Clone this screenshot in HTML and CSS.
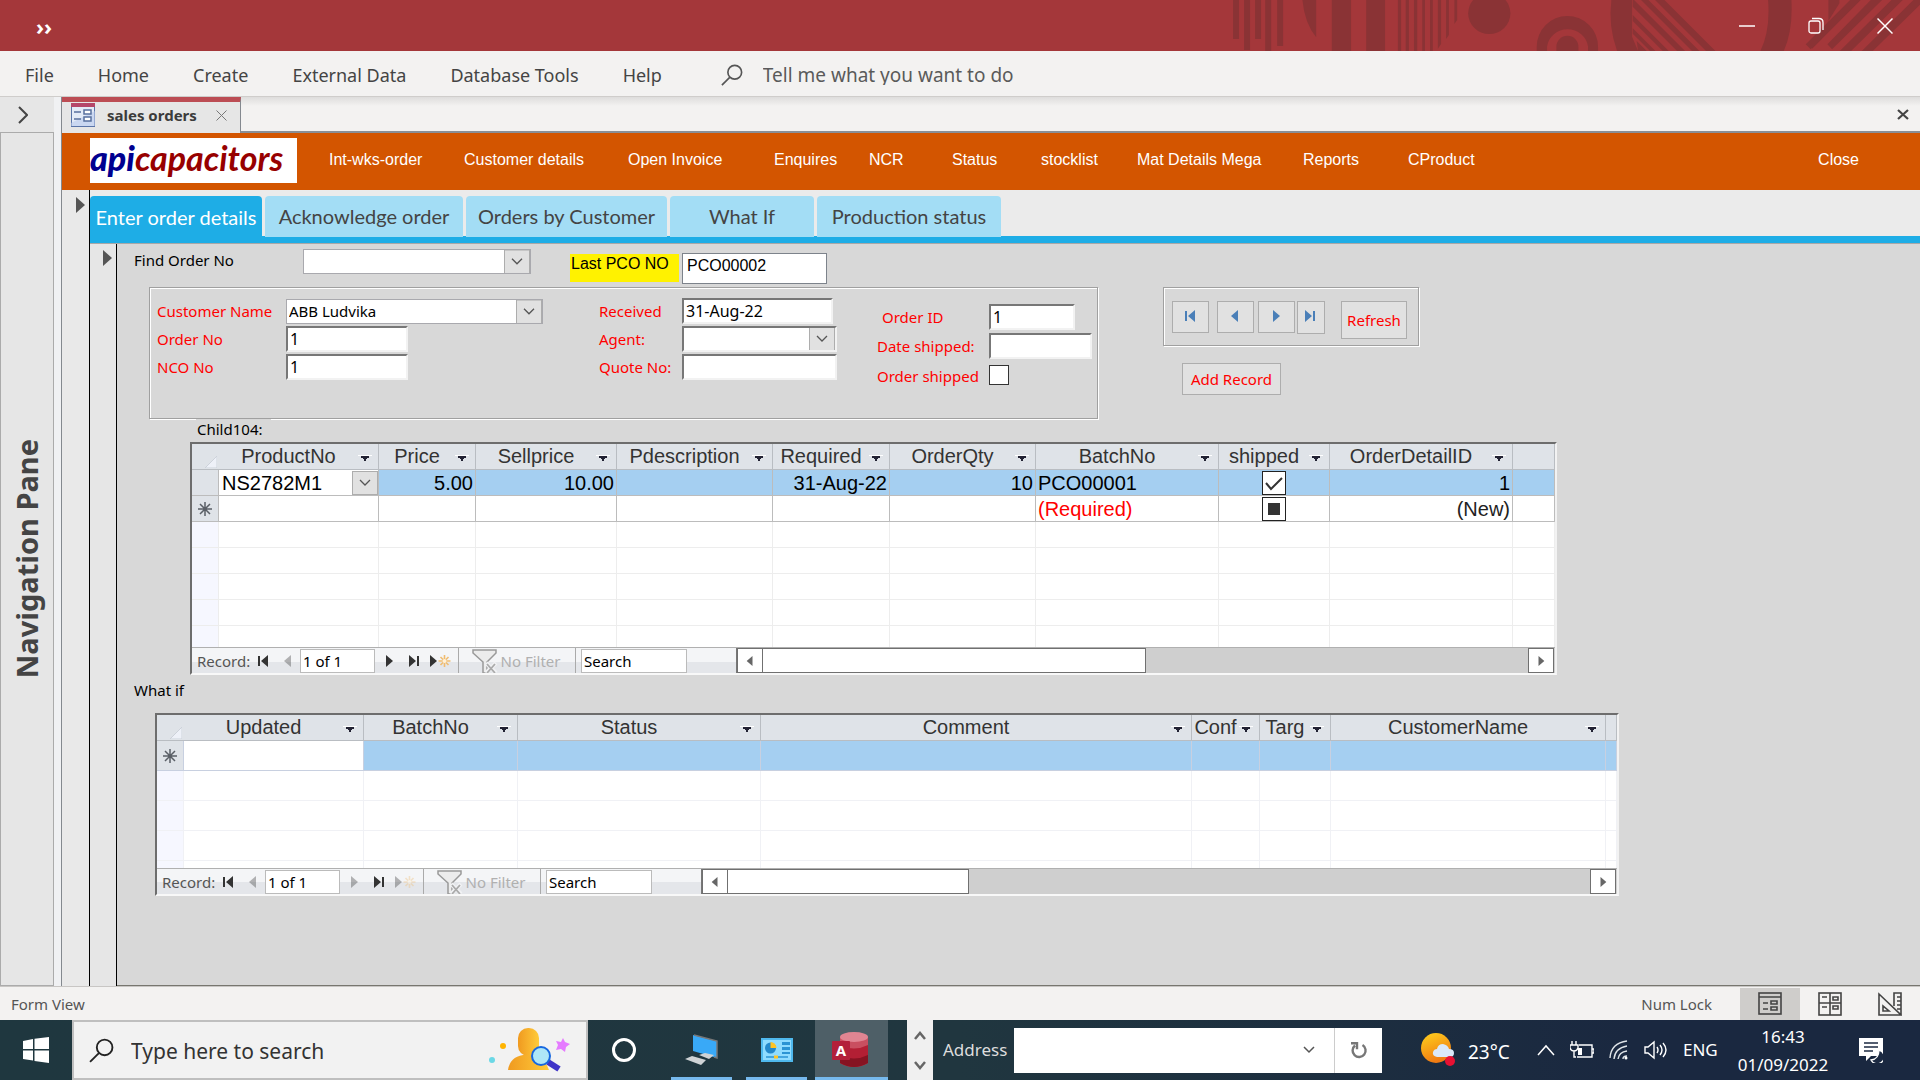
FILE: index.html
```html
<!DOCTYPE html>
<html lang="en">
<head>
<meta charset="utf-8">
<title>sales orders</title>
<link rel="stylesheet" href="styles.css">
</head>
<body>
<svg width="0" height="0" class="defs" aria-hidden="true">
  <symbol id="first" viewBox="0 0 12 12"><path d="M1 1h2v10H1zM11 0v12L4 6z"/></symbol>
  <symbol id="prev" viewBox="0 0 12 12"><path d="M9 0v12L2 6z"/></symbol>
  <symbol id="next" viewBox="0 0 12 12"><path d="M3 0v12l7-6z"/></symbol>
  <symbol id="last" viewBox="0 0 12 12"><path d="M9 1h2v10H9zM1 0v12l7-6z"/></symbol>
  <symbol id="new" viewBox="0 0 21 14"><path d="M0 1v12l7-6z"/><path d="M14.500 1v12M8.500 7h12M10.500 3l8 8M18.500 3l-8 8" stroke="#f0bc70" stroke-width="1.600" fill="none"/><circle cx="14.500" cy="7" r="2" fill="#fff1d8"/></symbol>
  <symbol id="funnel" viewBox="0 0 26 24"><path d="M1 1h23v3l-9 9v11h-4V13L1 4z" fill="#ececec" stroke="#999" stroke-width="1.500"/><path d="M14 14l10 10M24 14L14 24" stroke="#f1f2f4" stroke-width="4"/><path d="M15 15l8 9M23 15l-8 9" stroke="#aaa" stroke-width="1.800"/></symbol>
  <symbol id="drop" viewBox="0 0 14 8"><path d="M0 1.500h14" stroke="#fff"/><path d="M3 2h8v2H9v1H8v2H6V5H5V4H3z" fill="#223"/></symbol>
  <symbol id="star" viewBox="0 0 14 14"><path d="M7 0v14M0 7h14M2 2l10 10M12 2L2 12" stroke="#5a5f66" stroke-width="1.500"/></symbol>
  <symbol id="corner" viewBox="0 0 12 12"><path d="M12 0v12H0z" fill="#eef1f8" stroke="#cdd2da"/></symbol>
  <symbol id="search" viewBox="0 0 24 24"><circle cx="15" cy="9" r="7.500" fill="none" stroke="currentColor" stroke-width="1.800"/><path d="M9.500 14.500L1 23" stroke="currentColor" stroke-width="1.800"/></symbol>
</svg>

<header class="titlebar">
  <button class="quick" aria-label="Customize toolbar">››</button>
  <svg class="ornament" viewBox="0 0 1568 153" preserveAspectRatio="none" fill="#8a3335" aria-hidden="true">
    <path d="M72 0h13v117H72zM96 0h13v150H96zM120 0h13v117h-13zM142 0h13v153h-13zM168 0h13v138h-13z"/>
    <path d="M223 0h30v112Q228 70 223 0zM287 0h42v153h-42zM362 0h41v153h-41z"/>
    <path d="M431 0h7v153h-7zM448 0h7v153h-7zM466 0h7v153h-7zM484 0h6v153h-6zM501 0h6v153h-6zM518 0h7v132l-7 14zM536 0h6v105l-6 12zM554 0h6v60l-6 12z"/>
    <ellipse cx="630" cy="40" rx="46" ry="62"/>
    <g transform="translate(697 0) scale(.726 1)">
      <path d="M50 153v-13a92 92 0 0 1 184 0v13h-30v-13a62 60 0 0 0-123 0v13z"/>
      <path d="M109 153v-13a33 33 0 0 1 66 0v13z"/>
      <path d="M274 0h62v110l18 43h-63q-27-75-17-153z"/>
      <path d="M405 0h28l153 153h-28zM363 0h22l153 153h-22zM338 0h4l153 153h-24L338 20zM338 45l108 108h-18L338 63zM338 85l68 68h-16l-52-52zM350 123l30 30h-26z"/>
      <path d="M744 0h70q5 90-23 153h-70q30-60 23-153z"/>
      <path d="M922 0h36L876 148l-20-16zM986 0h36L938 148l-16-16zM922 0l36 0zM1050 0h33L930 153h-0zM1050 0h33L985 153h-33zM1113 0h35L1020 153h-35zM1176 0h24v12L1082 153h-34z" fill="none"/>
      <path d="M922 0h36L876 148 857 134zM986 0h36L941 148l-18-15zM1052 0h32L995 153h-36zM1114 0h33L1030 153h-34zM1180 0h20v18L1094 153h-34z" fill="none"/>
      <path d="M925 0h33v10L872 148l-15-15 68-68zM1052 0h34L936 148l-14-15zM1114 0h34L993 153h-34zM1180 0h20v14L1058 153h-33zM990 0h32L876 146l-17-15z"/>
    </g>
  </svg>
  <div class="window-buttons">
    <button aria-label="Minimize"><svg width="16" height="18" viewBox="0 0 16 18"><path d="M0 9h16" stroke="#fff" stroke-width="1.500"/></svg></button>
    <button aria-label="Restore"><svg width="16" height="18" viewBox="0 0 16 18" fill="none" stroke="#fff" stroke-width="1.300"><rect x="1" y="4" width="11" height="12" rx="2"/><path d="M4 1.500h7q4 0 4 4V13"/></svg></button>
    <button aria-label="Close window"><svg width="16" height="18" viewBox="0 0 16 18"><path d="M.5 1.500l15 15M15.500 1.500l-15 15" stroke="#fff" stroke-width="1.500"/></svg></button>
  </div>
</header>

<nav class="ribbon">
  <a href="#">File</a><a href="#">Home</a><a href="#">Create</a><a href="#">External Data</a><a href="#">Database Tools</a><a href="#">Help</a>
  <label class="tell"><svg width="22" height="22"><use href="#search"/></svg><input type="text" placeholder="Tell me what you want to do"></label>
</nav>

<main class="workspace">
  <aside class="navpane">
    <button class="expand" aria-label="Expand navigation pane"><svg width="10" height="18" viewBox="0 0 10 18"><path d="M1 1l8 8-8 8" fill="none" stroke="#444" stroke-width="2"/></svg></button>
    <div class="navpane-body"><span>Navigation Pane</span></div>
  </aside>
  <section class="document">
    <div class="doctabs">
      <div class="doctab">
        <svg width="24" height="24" viewBox="0 0 24 24"><rect x=".5" y=".5" width="23" height="23" fill="#e4ebf7" stroke="#5a74a8"/><path d="M0 0h24v4H0z" fill="#b5476a"/><path d="M0 20l24-12v15H0z" fill="#b9caec" opacity=".6"/><path d="M3 9h7M3 16h7" stroke="#58709e" stroke-width="1.500"/><path d="M13 7h7v4h-7zM13 14h7v4h-7z" fill="#fff" stroke="#58709e" stroke-width="1.500"/></svg>
        <span>sales orders</span>
        <button aria-label="Close tab"><svg width="11" height="11" viewBox="0 0 11 11"><path d="M.5.5l10 10M10.500.5l-10 10" stroke="#777"/></svg></button>
      </div>
      <button class="closedoc" aria-label="Close document"><svg width="12" height="11" viewBox="0 0 12 11"><path d="M1 1l10 9M11 1L1 10" stroke="#444" stroke-width="2.200"/></svg></button>
    </div>

    <div class="banner">
      <div class="logo"><b>api</b>capacitors</div>
      <nav class="banner-nav">
        <a href="#">Int-wks-order</a><a href="#">Customer details</a><a href="#">Open Invoice</a><a href="#">Enquires</a><a href="#">NCR</a><a href="#">Status</a><a href="#">stocklist</a><a href="#">Mat Details Mega</a><a href="#">Reports</a><a href="#">CProduct</a><a href="#">Close</a>
      </nav>
    </div>

    <div class="outer">
      <div class="selector"><svg width="9" height="16" viewBox="0 0 9 16"><path d="M0 0v16l9-8z" fill="#555"/></svg></div>
      <div class="pages">
        <nav class="pagetabs">
          <a class="pagetab active" href="#">Enter order details</a>
          <a class="pagetab" href="#">Acknowledge order</a>
          <a class="pagetab" href="#">Orders by Customer</a>
          <a class="pagetab" href="#">What If</a>
          <a class="pagetab" href="#">Production status</a>
        </nav>
        <div class="inner">
          <div class="selector"><svg width="9" height="16" viewBox="0 0 9 16"><path d="M0 0v16l9-8z" fill="#555"/></svg></div>
          <form class="form">
            <div class="find">
              <label for="find">Find Order No</label>
              <select id="find" class="combo"><option></option></select>
              <label for="pco" class="mark">Last PCO NO</label>
              <input id="pco" class="pco" value="PCO00002">
            </div>
            <div class="details">
              <div class="frame order">
                <div class="fields customer">
                  <label for="cust">Customer Name</label><select id="cust" class="combo"><option>ABB Ludvika</option></select>
                  <label for="ono">Order No</label><input id="ono" class="short" value="1">
                  <label for="nco">NCO No</label><input id="nco" class="short" value="1">
                </div>
                <div class="fields quote">
                  <label for="rec">Received</label><input id="rec" class="received" value="31-Aug-22">
                  <label for="agent">Agent:</label><select id="agent" class="combo sunk"><option></option></select>
                  <label for="qno">Quote No:</label><input id="qno">
                </div>
                <div class="fields shipping">
                  <label for="oid" class="indent">Order ID</label><input id="oid" class="id" value="1">
                  <label for="dship">Date shipped:</label><input id="dship">
                  <label for="oship" class="low">Order shipped</label><input id="oship" type="checkbox" class="tick">
                </div>
              </div>
              <div class="actions">
                <div class="frame browse">
                  <button type="button" aria-label="First record"><svg width="14" height="12"><use href="#first"/></svg></button>
                  <button type="button" aria-label="Previous record"><svg width="14" height="12"><use href="#prev"/></svg></button>
                  <button type="button" aria-label="Next record"><svg width="14" height="12"><use href="#next"/></svg></button>
                  <button type="button" class="slim" aria-label="Last record"><svg width="14" height="12"><use href="#last"/></svg></button>
                  <button type="button" class="refresh">Refresh</button>
                </div>
                <button type="button" class="add">Add Record</button>
              </div>
            </div>

            <div class="child-label">Child104:</div>
            <div class="subform items">
              <div class="sheet">
                <table>
                  <colgroup><col class="w27"><col class="w160"><col class="w97"><col class="w141"><col class="w156"><col class="w117"><col class="w146"><col class="w183"><col class="w111"><col class="w183"><col></colgroup>
                  <thead><tr>
                    <th><svg width="12" height="12"><use href="#corner"/></svg></th>
                    <th><div><span>ProductNo</span><svg><use href="#drop"/></svg></div></th>
                    <th><div><span>Price</span><svg><use href="#drop"/></svg></div></th>
                    <th><div><span>Sellprice</span><svg><use href="#drop"/></svg></div></th>
                    <th><div><span>Pdescription</span><svg><use href="#drop"/></svg></div></th>
                    <th><div><span>Required</span><svg><use href="#drop"/></svg></div></th>
                    <th><div><span>OrderQty</span><svg><use href="#drop"/></svg></div></th>
                    <th><div><span>BatchNo</span><svg><use href="#drop"/></svg></div></th>
                    <th><div><span>shipped</span><svg><use href="#drop"/></svg></div></th>
                    <th><div><span>OrderDetailID</span><svg><use href="#drop"/></svg></div></th>
                    <th></th>
                  </tr></thead>
                  <tbody>
                    <tr class="current"><td></td><td class="edit"><select class="combo" aria-label="ProductNo"><option>NS2782M1</option></select></td><td class="num">5.00</td><td class="num">10.00</td><td></td><td class="num">31-Aug-22</td><td class="num">10</td><td>PCO00001</td><td class="mid"><input type="checkbox" class="box" checked aria-label="shipped"></td><td class="num">1</td><td></td></tr>
                    <tr class="fresh"><td><svg width="14" height="14"><use href="#star"/></svg></td><td></td><td></td><td></td><td></td><td></td><td></td><td class="need">(Required)</td><td class="mid"><input type="checkbox" class="box mixed" aria-label="shipped, new record"></td><td class="num">(New)</td><td></td></tr>
                    <tr><td></td><td></td><td></td><td></td><td></td><td></td><td></td><td></td><td></td><td></td><td></td></tr>
                    <tr><td></td><td></td><td></td><td></td><td></td><td></td><td></td><td></td><td></td><td></td><td></td></tr>
                    <tr><td></td><td></td><td></td><td></td><td></td><td></td><td></td><td></td><td></td><td></td><td></td></tr>
                    <tr><td></td><td></td><td></td><td></td><td></td><td></td><td></td><td></td><td></td><td></td><td></td></tr>
                    <tr><td></td><td></td><td></td><td></td><td></td><td></td><td></td><td></td><td></td><td></td><td></td></tr>
                  </tbody>
                </table>
              </div>
              <div class="recordbar">
                <div class="recordnav">
                  <span>Record:</span>
                  <button type="button" aria-label="First"><svg width="12" height="12"><use href="#first"/></svg></button>
                  <button type="button" aria-label="Previous" disabled><svg width="12" height="12"><use href="#prev"/></svg></button>
                  <input class="pos" value="1 of 1" aria-label="Record position">
                  <button type="button" aria-label="Next"><svg width="12" height="12"><use href="#next"/></svg></button>
                  <button type="button" aria-label="Last"><svg width="12" height="12"><use href="#last"/></svg></button>
                  <button type="button" class="newrec" aria-label="New record"><svg width="21" height="14"><use href="#new"/></svg></button>
                </div>
                <button type="button" class="filter" disabled><svg width="26" height="24"><use href="#funnel"/></svg>No Filter</button>
                <div class="searchbox"><input value="Search" aria-label="Search records"></div>
                <div class="scroll"><button type="button" aria-label="Scroll left"><svg width="10" height="12"><use href="#prev"/></svg></button><div class="thumb"></div><button type="button" class="right" aria-label="Scroll right"><svg width="10" height="12"><use href="#next"/></svg></button></div>
              </div>
            </div>

            <div class="whatif-label">What if</div>
            <div class="subform whatif">
              <div class="sheet">
                <table>
                  <colgroup><col class="w27"><col class="w180"><col class="w154"><col class="w243"><col class="w431"><col class="w68"><col class="w71"><col class="w275"><col></colgroup>
                  <thead><tr>
                    <th><svg width="12" height="12"><use href="#corner"/></svg></th>
                    <th><div><span>Updated</span><svg><use href="#drop"/></svg></div></th>
                    <th><div><span>BatchNo</span><svg><use href="#drop"/></svg></div></th>
                    <th><div><span>Status</span><svg><use href="#drop"/></svg></div></th>
                    <th><div><span>Comment</span><svg><use href="#drop"/></svg></div></th>
                    <th><div><span>Conf</span><svg><use href="#drop"/></svg></div></th>
                    <th><div><span>Targ</span><svg><use href="#drop"/></svg></div></th>
                    <th><div><span>CustomerName</span><svg><use href="#drop"/></svg></div></th>
                    <th></th>
                  </tr></thead>
                  <tbody>
                    <tr class="current"><td><svg width="14" height="14"><use href="#star"/></svg></td><td class="edit"></td><td></td><td></td><td></td><td></td><td></td><td></td><td></td></tr>
                    <tr><td></td><td></td><td></td><td></td><td></td><td></td><td></td><td></td><td></td></tr>
                    <tr><td></td><td></td><td></td><td></td><td></td><td></td><td></td><td></td><td></td></tr>
                    <tr><td></td><td></td><td></td><td></td><td></td><td></td><td></td><td></td><td></td></tr>
                    <tr><td></td><td></td><td></td><td></td><td></td><td></td><td></td><td></td><td></td></tr>
                  </tbody>
                </table>
              </div>
              <div class="recordbar">
                <div class="recordnav">
                  <span>Record:</span>
                  <button type="button" aria-label="First"><svg width="12" height="12"><use href="#first"/></svg></button>
                  <button type="button" aria-label="Previous" disabled><svg width="12" height="12"><use href="#prev"/></svg></button>
                  <input class="pos" value="1 of 1" aria-label="Record position">
                  <button type="button" aria-label="Next" disabled><svg width="12" height="12"><use href="#next"/></svg></button>
                  <button type="button" aria-label="Last"><svg width="12" height="12"><use href="#last"/></svg></button>
                  <button type="button" class="newrec" aria-label="New record" disabled><svg width="21" height="14"><use href="#new"/></svg></button>
                </div>
                <button type="button" class="filter" disabled><svg width="26" height="24"><use href="#funnel"/></svg>No Filter</button>
                <div class="searchbox"><input value="Search" aria-label="Search records"></div>
                <div class="scroll"><button type="button" aria-label="Scroll left"><svg width="10" height="12"><use href="#prev"/></svg></button><div class="thumb"></div><button type="button" class="right" aria-label="Scroll right"><svg width="10" height="12"><use href="#next"/></svg></button></div>
              </div>
            </div>
          </form>
        </div>
      </div>
    </div>
  </section>
</main>

<footer class="status">
  <span>Form View</span>
  <span class="numlock">Num Lock</span>
  <button class="on" aria-label="Form view"><svg width="24" height="24" viewBox="0 0 24 24" fill="none" stroke="#444" stroke-width="1.600"><rect x="1" y="1" width="22" height="21"/><path d="M1 5h22M5 11h5M5 17h5"/><path d="M13 9h6v3h-6zM13 15h6v3h-6z"/></svg></button>
  <button aria-label="Layout view"><svg width="24" height="24" viewBox="0 0 24 24" fill="none" stroke="#444" stroke-width="1.600"><rect x="1" y="1" width="22" height="22"/><path d="M1 11h22M12 1v22M4 5h5M4 15h5M15 5h5v3h-5zM15 14h5v3h-5z"/></svg></button>
  <button aria-label="Design view"><svg width="24" height="24" viewBox="0 0 24 24" fill="none" stroke="#444" stroke-width="1.600"><path d="M1 2v21h22zM5 14v5h6zM16 14V1h7v22M19 5h4M19 9h4M19 13h4M19 17h4"/></svg></button>
</footer>

<footer class="taskbar">
  <button class="start" aria-label="Start"><svg width="26" height="26" viewBox="0 0 26 26" fill="#fff"><path d="M0 4l10-2v10H0zM11.500 1.700L26 0v12H11.500zM0 13.500h10v10L0 22zM11.500 13.500H26V26l-14.500-2z"/></svg></button>
  <label class="tasksearch">
    <svg width="25" height="25"><use href="#search"/></svg>
    <input type="text" placeholder="Type here to search">
    <svg width="84" height="44" viewBox="0 0 84 44" aria-hidden="true"><defs><linearGradient id="g1"><stop stop-color="#f09a20"/><stop offset="1" stop-color="#ffcb3a"/></linearGradient></defs><circle cx="15" cy="18" r="3" fill="#ffb400"/><circle cx="4" cy="32" r="3" fill="#6bd8e6"/><path d="M20 42q2-13 15-15h8q14 3 18 15z" fill="url(#g1)"/><rect x="30" y="0" width="21" height="28" rx="10" fill="url(#g1)"/><path d="M60 34l11 7" stroke="#3f33c8" stroke-width="6"/><circle cx="53" cy="28" r="9" fill="#aee6f7" stroke="#1768e0" stroke-width="2"/><path d="M75 10l2 4 5 2-4 3-1 5-4-3-5 1 2-5-2-4 5 1z" fill="#e57bff"/></svg>
  </label>
  <button class="app cortana" aria-label="Cortana"><svg width="26" height="26" viewBox="0 0 26 26"><circle cx="13" cy="13" r="10.500" fill="none" stroke="#fff" stroke-width="3"/></svg></button>
  <button class="app open double" aria-label="Remote desktop"><svg width="34" height="34" viewBox="0 0 34 34"><path d="M8 2l24 6v17L8 18z" fill="#39a9f7"/><path d="M9 2l23 6v17l-3-1" fill="none" stroke="#777" stroke-width="1.500"/><path d="M0 26l7-3 14 4-5 5zM14 22l6-2 9 2-5 4z" fill="#cfd3d6"/></svg></button>
  <button class="app open" aria-label="Control panel"><svg width="32" height="24" viewBox="0 0 32 24"><rect width="32" height="24" fill="#4fb9ee"/><rect x="2" y="2" width="28" height="20" fill="#8fdcff"/><circle cx="9.500" cy="10" r="5.500" fill="#2489cc"/><path d="M9.500 10V4a6 6 0 0 1 6 6z" fill="#ffc425"/><path d="M21 4h8v3h-8zM21 9h8v3h-8zM21 14h8v2h-8z" fill="#2b94d4"/><path d="M5 19h22" stroke="#2b94d4" stroke-width="1.500"/><path d="M13 19h4" stroke="#ffc425" stroke-width="3"/></svg></button>
  <button class="app open current" aria-label="Access"><svg width="36" height="36" viewBox="0 0 36 36"><path d="M8 5v26q14 8 28 0V5z" fill="#c94f60"/><path d="M8 13v18q14 8 28 0V13q-14 7-28 0z" fill="#b31f34"/><path d="M8 23v8q14 8 28 0v-8q-14 7-28 0z" fill="#861322"/><ellipse cx="22" cy="5" rx="14" ry="5" fill="#e08592"/><rect y="9" width="18" height="19" rx="1" fill="#b3203a"/></svg><b>A</b></button>
  <div class="scroller"><button aria-label="Up"><svg width="12" height="9" viewBox="0 0 12 9"><path d="M1 8l5-6 5 6" fill="none" stroke="#666" stroke-width="2.500"/></svg></button><button aria-label="Down"><svg width="12" height="9" viewBox="0 0 12 9"><path d="M1 1l5 6 5-6" fill="none" stroke="#666" stroke-width="2.500"/></svg></button></div>
  <label class="address" for="addr">Address</label>
  <select id="addr"><option></option></select>
  <button class="go" aria-label="Refresh address"><svg width="18" height="18" viewBox="0 0 18 18"><path d="M12.500 4A6.500 6.500 0 1 1 5 4.500M1 2.200h6v6" fill="none" stroke="#777" stroke-width="2.400"/></svg></button>
  <div class="weather"><svg width="34" height="34" viewBox="0 0 34 34"><defs><linearGradient id="g2" x2=".4" y2="1"><stop stop-color="#ffd21e"/><stop offset="1" stop-color="#f07a12"/></linearGradient></defs><circle cx="15" cy="15" r="15" fill="url(#g2)"/><path d="M16 24q-5-1-4-5 1-3 4-3 1-5 6-5 5 1 6 5 5 0 5 4t-4 4z" fill="#dbe8f8"/><circle cx="29" cy="28" r="5" fill="#e81133"/></svg><span>23°C</span></div>
  <div class="tray">
    <svg width="18" height="12" viewBox="0 0 18 12"><path d="M1 11l8-9 8 9" fill="none" stroke="#fff" stroke-width="1.500"/></svg>
    <svg width="24" height="18" viewBox="0 0 24 18" fill="none" stroke="#fff" stroke-width="1.400"><path d="M7 16h15V4H9M22 8h2v4h-2M2 0v4M6 0v4M0 4h8v3q-1 3-4 3t-4-3zM4 10v6h2"/><path d="M8 7h4v7H8z" fill="#fff" stroke="none"/></svg>
    <svg width="20" height="20" viewBox="0 0 20 20" fill="none" stroke="#dfe4e8" stroke-width="1.400"><path d="M1 18Q2 3 18 1M5 19Q6 8 18 6M9 19q1-7 9-8M14 19q0-3 4-3"/><circle cx="17" cy="18" r="1.500" fill="#fff" stroke="none"/></svg>
    <svg width="24" height="20" viewBox="0 0 24 20" fill="none" stroke="#fff" stroke-width="1.400"><path d="M1 7h3l6-5v16l-6-5H1zM13 7q2 3 0 6M16 5q4 5 0 10M19 3q6 7 0 14"/></svg>
    <span>ENG</span>
  </div>
  <div class="clock"><span>16:43</span><span>01/09/2022</span></div>
  <button class="notify" aria-label="Notifications"><svg width="24" height="25" viewBox="0 0 24 25"><path d="M0 0h24v18H12l-5 5v-5H0z" fill="#fff"/><path d="M5 5h14M5 9h14M5 13h9" stroke="#1c2a42" stroke-width="1.500"/><path d="M20 12a7 7 0 1 1-8 10q8-1 8-10z" fill="#1c2a42" stroke="#fff" stroke-width="1.300"/></svg></button>
</footer>
</body>
</html>
```
FILE: styles.css
```css
* { box-sizing: border-box; }

body {
  margin: 0;
  height: 100vh;
  display: flex;
  flex-direction: column;
  overflow: hidden;
  font: 16px/20px "Noto Sans", sans-serif;
  color: #444;
  background: #f3f2f1;
}

a { color: inherit; text-decoration: none; }
button { padding: 0; border: 0; background: none; font: inherit; color: inherit; display: flex; align-items: center; justify-content: center; }
input, select { font: inherit; color: inherit; margin: 0; border-radius: 0; min-width: 0; }
.defs { position: absolute; }

/* window chrome */
.titlebar { display: flex; align-items: center; height: 51px; flex: none; background: #a4373a; color: #fff; position: relative; }
.quick { margin-left: 36px; font-size: 22px; font-weight: 700; z-index: 1; }
.ornament { position: absolute; right: 0; top: 0; width: 720px; height: 51px; }
.window-buttons { display: flex; margin-left: auto; padding-right: 1px; z-index: 1; }
.window-buttons button { width: 69px; height: 51px; }

.ribbon { display: flex; align-items: center; flex: none; height: 46px; padding: 2px 0 0 25px; gap: 44px; font-size: 18px; border-bottom: 1px solid #cfcdcb; }
.tell { display: flex; align-items: center; gap: 20px; margin-left: 15px; flex: 1; font-size: 19px; color: #555; }
.tell input { flex: 1; border: 0; background: none; padding: 0; }
.tell input::placeholder { color: #5a5a5a; opacity: 1; }

.workspace { display: flex; flex: 1; min-height: 0; }
.navpane { width: 62px; flex: none; display: flex; flex-direction: column; border-right: 8px solid #f0f1f3; background: #e6e6e6; }
.expand { height: 35px; width: 46px; }
.navpane-body { flex: 1; display: flex; align-items: center; justify-content: center; border: 1px solid #ababab; }
.navpane-body span { writing-mode: vertical-rl; transform: rotate(180deg); font-size: 29px; line-height: 30px; font-weight: 700; color: #444; }

.document { flex: 1; min-width: 0; display: flex; flex-direction: column; border-left: 1px solid #84898f; margin-left: -1px; }
.doctabs { display: flex; flex: none; height: 36px; justify-content: space-between; align-items: center; border-bottom: 2px solid #8a8f96; background: linear-gradient(#dedddc, #f3f2f1 9px); }
.doctab { display: flex; align-items: center; width: 179px; height: 36px; margin-bottom: -2px; padding: 0 13px 5px 9px; border-top: 5px solid #bc4d54; border-right: 1px solid #84898f; background: #e6e6e6; font-size: 15px; font-weight: 700; color: #3b3b3b; }
.doctab span { margin-left: 12px; flex: 1; }
.closedoc { margin-right: 11px; }

.banner { display: flex; flex: none; height: 57px; padding: 5px 61px 7px 28px; background: #d35500; }
.logo { width: 207px; background: #fff; color: #970000; font: italic 700 34px/39px Lato, sans-serif; white-space: nowrap; }
.logo b { color: #000090; }
.banner-nav { flex: 1; display: grid; grid-template-columns: 135px 164px 146px 95px 83px 89px 96px 166px 105px 1fr auto; margin-left: 32px; padding-bottom: 2px; align-items: center; color: #fff; font-family: "Liberation Sans", sans-serif; }

.outer, .inner { display: flex; flex: 1; min-height: 0; }
.selector { width: 28px; flex: none; border-right: 1px solid #000; background: #e9e9e9; padding: 7px 0 0 14px; }
.inner .selector { width: 27px; background: #e6e6e6; padding: 6px 0 0 13px; }
.selector svg { display: block; }
.pages { flex: 1; min-width: 0; display: flex; flex-direction: column; }
.pagetabs { display: flex; flex: none; align-items: flex-start; gap: 3px; height: 54px; padding-top: 6px; border-bottom: 1px solid #a8a8a8; background: linear-gradient(#ebebeb 46px, #1eade6 46px); }
.pagetab { height: 41px; line-height: 40px; border-radius: 4px 4px 0 0; background: #a3ddf5; font-family: Lato, sans-serif; font-size: 20px; color: #444; text-align: center; }
.pagetab:nth-child(1) { width: 172px; height: 47px; line-height: 42px; }
.pagetab:nth-child(2) { width: 198px; }
.pagetab:nth-child(3) { width: 201px; }
.pagetab:nth-child(4) { width: 144px; }
.pagetab:nth-child(5) { width: 184px; }
.pagetab.active { background: #1eade6; color: #fff; }

/* order form */
.form { flex: 1; min-width: 0; background: #d8d8d8; padding-top: 5px; border-bottom: 1px solid #77766f; font-size: 15px; color: #000; }
.form input:not([type]), .combo { height: 26px; padding: 0 3px; border: 2px solid; border-color: #777 #f2f2f2 #f2f2f2 #777; background-color: #fff; color: #000; }
.fields input:not([type]) { padding: 0 2px; font-size: 16px; }
.form .combo { appearance: none; border: 1px solid #a9a9ae; padding: 0 28px 0 2px; height: 25px; background: #fff url("data:image/svg+xml,%3Csvg xmlns='http://www.w3.org/2000/svg' width='26' height='24'%3E%3Crect x='.5' y='.5' width='25' height='23' fill='%23e1e1e1' stroke='%23adadad'/%3E%3Cpath d='M8 9l5 5 5-5' fill='none' stroke='%23555' stroke-width='1.300'/%3E%3C/svg%3E") right center no-repeat; }
.form .combo.sunk { border: 2px solid; border-color: #777 #f2f2f2 #f2f2f2 #777; height: 26px; }

.find { display: grid; grid-template-columns: 169px 228px 109px 145px; align-items: start; height: 38px; padding-left: 17px; }
.find label { line-height: 22px; }
.find .mark { height: 28px; width: 109px; margin: 5px 0 0 39px; line-height: 20px; padding-left: 1px; background: #fff200; font-family: "Liberation Sans", sans-serif; font-size: 16px; }
.form .find .pco { height: 31px; width: 145px; margin: 4px 0 0 42px; padding: 0 4px 6px; border: 1px solid #7d838b; font-family: "Liberation Sans", sans-serif; font-size: 16px; }

.details { display: flex; align-items: flex-start; gap: 65px; padding-left: 32px; }
.frame { border: 1px solid #a0a0a0; box-shadow: 1px 1px 0 #fff, inset 1px 1px 0 #fff; }
.order { display: flex; align-items: flex-start; width: 949px; height: 132px; padding: 9px 6px 0 7px; color: #f00; }
.fields { display: grid; grid-auto-rows: 28px; align-items: center; }
.customer { grid-template-columns: 129px 257px; }
.quote { grid-template-columns: 83px 155px; margin-left: 56px; }
.shipping { grid-template-columns: 112px 103px; margin: 5px 0 0 40px; grid-auto-rows: 29px; }
.fields label { line-height: 26px; white-space: nowrap; }
.indent { padding-left: 5px; }
.low { align-self: end; }
.short { width: 122px; }
.received { width: 151px; }
.id { width: 86px; }
.tick { appearance: none; width: 20px; height: 20px; align-self: center; border: 1px solid #333; background: #fff; }

.browse { display: flex; align-items: flex-start; width: 256px; height: 59px; padding: 13px 0 0 8px; }
.browse button, .add { border: 1px solid #adadad; background: #e1e1e1; color: #f00; }
.browse button { width: 37px; height: 32px; margin-right: 8px; padding: 0 2px 3px 0; }
.browse button:nth-child(2) { margin-right: 4px; }
.browse button:nth-child(3) { margin-right: 2px; }
.browse .slim { width: 28px; height: 33px; margin-right: 16px; }
.browse .refresh { width: 66px; height: 38px; margin: 0; padding: 0; }
.browse svg { fill: #4a7fb8; }
.add { width: 99px; height: 32px; margin: 17px 0 0 19px; }

.child-label { position: relative; width: 75px; height: 23px; margin-left: 79px; padding-left: 1px; background: #d8d8d8; }
.whatif-label { height: 38px; padding: 5px 0 0 17px; }

/* datasheets */
.subform { border: 2px solid; border-color: #6d6d6d #f2f2f2 #f8f8f8 #6d6d6d; background: #fff; }
.items { width: 1367px; margin-left: 73px; }
.whatif { width: 1464px; margin-left: 38px; }
.sheet { overflow: hidden; height: 203px; font: 20px/23px "Liberation Sans", sans-serif; }
.whatif .sheet { height: 153px; }
table { table-layout: fixed; border-collapse: separate; border-spacing: 0; width: 100%; }
.w27 { width: 27px; } .w68 { width: 68px; } .w71 { width: 71px; } .w97 { width: 97px; } .w111 { width: 111px; }
.w117 { width: 117px; } .w141 { width: 141px; } .w146 { width: 146px; } .w154 { width: 154px; } .w156 { width: 156px; }
.w160 { width: 160px; } .w180 { width: 180px; } .w183 { width: 183px; } .w243 { width: 243px; } .w275 { width: 275px; } .w431 { width: 431px; }
th, td { height: 26px; padding: 2px 2px 0; border: 0 solid #ededed; border-width: 0 1px 1px 0; white-space: nowrap; overflow: hidden; text-align: left; }
th { padding-top: 0; background: #dfe3e8; border-color: #b9bdc2; font-weight: 400; color: #333; }
th div { display: flex; align-items: center; }
th span { flex: 1; min-width: 0; overflow: hidden; text-align: center; }
th div svg { width: 14px; height: 8px; margin: 3px 4px 0 2px; flex: none; }
th:first-child { border-right: 0; text-align: right; }
th:first-child svg { display: inline-block; vertical-align: bottom; }
td:first-child { padding: 0; background: #f6f7ff; text-align: center; }
td:first-child svg { display: block; margin: 0 auto; }
.current td { background: #a5cff1; border-color: #bcbcbc; color: #000; }
.current td.edit { background: #fff; padding: 0; }
.current td:first-child, .fresh td:first-child { background: #dfe3e8; }
.fresh td { border-color: #bcbcbc; color: #222; }
.fresh td.need { color: #f00; }
.num { text-align: right; }
.mid, .fresh .mid { padding: 0; text-align: center; line-height: 0; }
.form .edit .combo { display: block; width: 100%; height: 25px; border: 0; padding: 2px 0 0 3px; }
.whatif tbody td { height: 30px; border-color: #f0f1f5; }
.whatif .current td { border-color: #c8d0e0; }
.box { appearance: none; width: 24px; height: 24px; border: 1px solid #222; background: #fff; }
.box:checked { background: #fff url("data:image/svg+xml,%3Csvg xmlns='http://www.w3.org/2000/svg' width='22' height='22'%3E%3Cpath d='M3 11l5 6L19 6' fill='none' stroke='%23333' stroke-width='2'/%3E%3C/svg%3E"); }
.box.mixed { background: linear-gradient(#333, #333) center / 12px 12px no-repeat #fff; }

.recordbar { display: flex; height: 26px; font-size: 15px; color: #555; background: linear-gradient(#f4f5f7 54%, #e4e6ea 54%); border-top: 1px solid #b0b0b0; }
.recordnav { display: flex; align-items: center; width: 267px; padding-left: 5px; border-right: 1px solid #aaa; }
.recordnav span { width: 60px; }
.recordnav button { width: 12px; height: 20px; margin-right: 13px; }
.recordnav svg { fill: #333; }
.recordnav button:disabled { opacity: .35; }
.form .recordnav .pos { width: 75px; height: 24px; margin: 0 8px 0 -7px; padding: 0 2px; border: 1px solid #bbb; }
.recordnav .pos + button + button { margin-right: 10px; }
.recordnav .newrec { width: 21px; margin: 0; }
.filter { width: 117px; border-right: 1px solid #aaa; color: #b0b0b0; gap: 3px; padding-right: 2px; }
.searchbox { width: 161px; padding: 1px 0 0 5px; border-right: 1px solid #777; }
.form .searchbox input { display: block; width: 106px; height: 24px; padding: 0 2px; border: 1px solid #bbb; }
.scroll { flex: 1; display: flex; height: 25px; background: #cfcfcf; }
.scroll button, .thumb { background: #fff; border: 1px solid #707070; }
.scroll button { width: 26px; }
.scroll svg { fill: #666; }
.thumb { width: 384px; margin-left: -1px; }
.whatif .thumb { width: 242px; }
.scroll .right { margin: 0 1px 0 auto; }

/* access status bar */
.status { display: flex; align-items: center; flex: none; height: 34px; padding-left: 11px; border-top: 1px solid #c8c6c4; font-size: 15px; color: #555; }
.numlock { margin: 0 28px 0 auto; }
.status button { width: 60px; height: 32px; }
.status button.on { background: #cfcdcb; }

/* windows taskbar */
.taskbar { display: flex; align-items: center; flex: none; height: 60px; padding-right: 7px; color: #fff; font-size: 18px; background: linear-gradient(90deg, #1f373f, #20363f 50%, #1a2840 85%); }
.start { width: 72px; height: 60px; }
.tasksearch { display: flex; align-items: center; width: 516px; height: 60px; padding: 0 14px 0 15px; border: 2px solid #bfbfbf; background: #f2f2f2; color: #222; }
.tasksearch input { flex: 1; border: 0; background: none; padding: 2px 0 0; margin-left: 17px; font-size: 21px; }
.tasksearch input::placeholder { color: #333; opacity: 1; }
.app { width: 61px; height: 60px; margin-right: 14px; position: relative; }
.open { border-bottom: 3px solid #76b9ed; padding-top: 3px; }
.cortana { width: 72px; margin-right: 11px; }
.app.current { width: 73px; margin: 0 19px 0 -6px; padding-right: 3px; background: #4e5f67; }
.app.current b { position: absolute; left: 17px; top: 20px; width: 18px; font-size: 15px; line-height: 20px; }
.scroller { width: 26px; height: 60px; display: flex; flex-direction: column; justify-content: space-around; align-items: center; background: #f0f0f0; }
.address { width: 81px; padding-left: 10px; color: #ddd; font-size: 17px; }
.taskbar select { flex: 1; height: 45px; appearance: none; border: 0; border-right: 1px solid #ccc; background: #fff url("data:image/svg+xml,%3Csvg xmlns='http://www.w3.org/2000/svg' width='12' height='8'%3E%3Cpath d='M1 1l5 5 5-5' fill='none' stroke='%23555' stroke-width='1.500'/%3E%3C/svg%3E") right 19px center no-repeat; }
.go { width: 47px; height: 45px; background: #fff; }
.weather { display: flex; align-items: center; gap: 13px; width: 116px; margin-left: 39px; font-size: 19px; }
.weather span { padding-top: 3px; }
.tray { display: flex; align-items: center; gap: 15px; width: 182px; font-size: 17px; }
.clock { display: flex; flex-direction: column; align-items: center; gap: 8px; width: 128px; padding-top: 2px; font-size: 17px; }
.notify { width: 48px; height: 60px; margin-right: 18px; }
```
